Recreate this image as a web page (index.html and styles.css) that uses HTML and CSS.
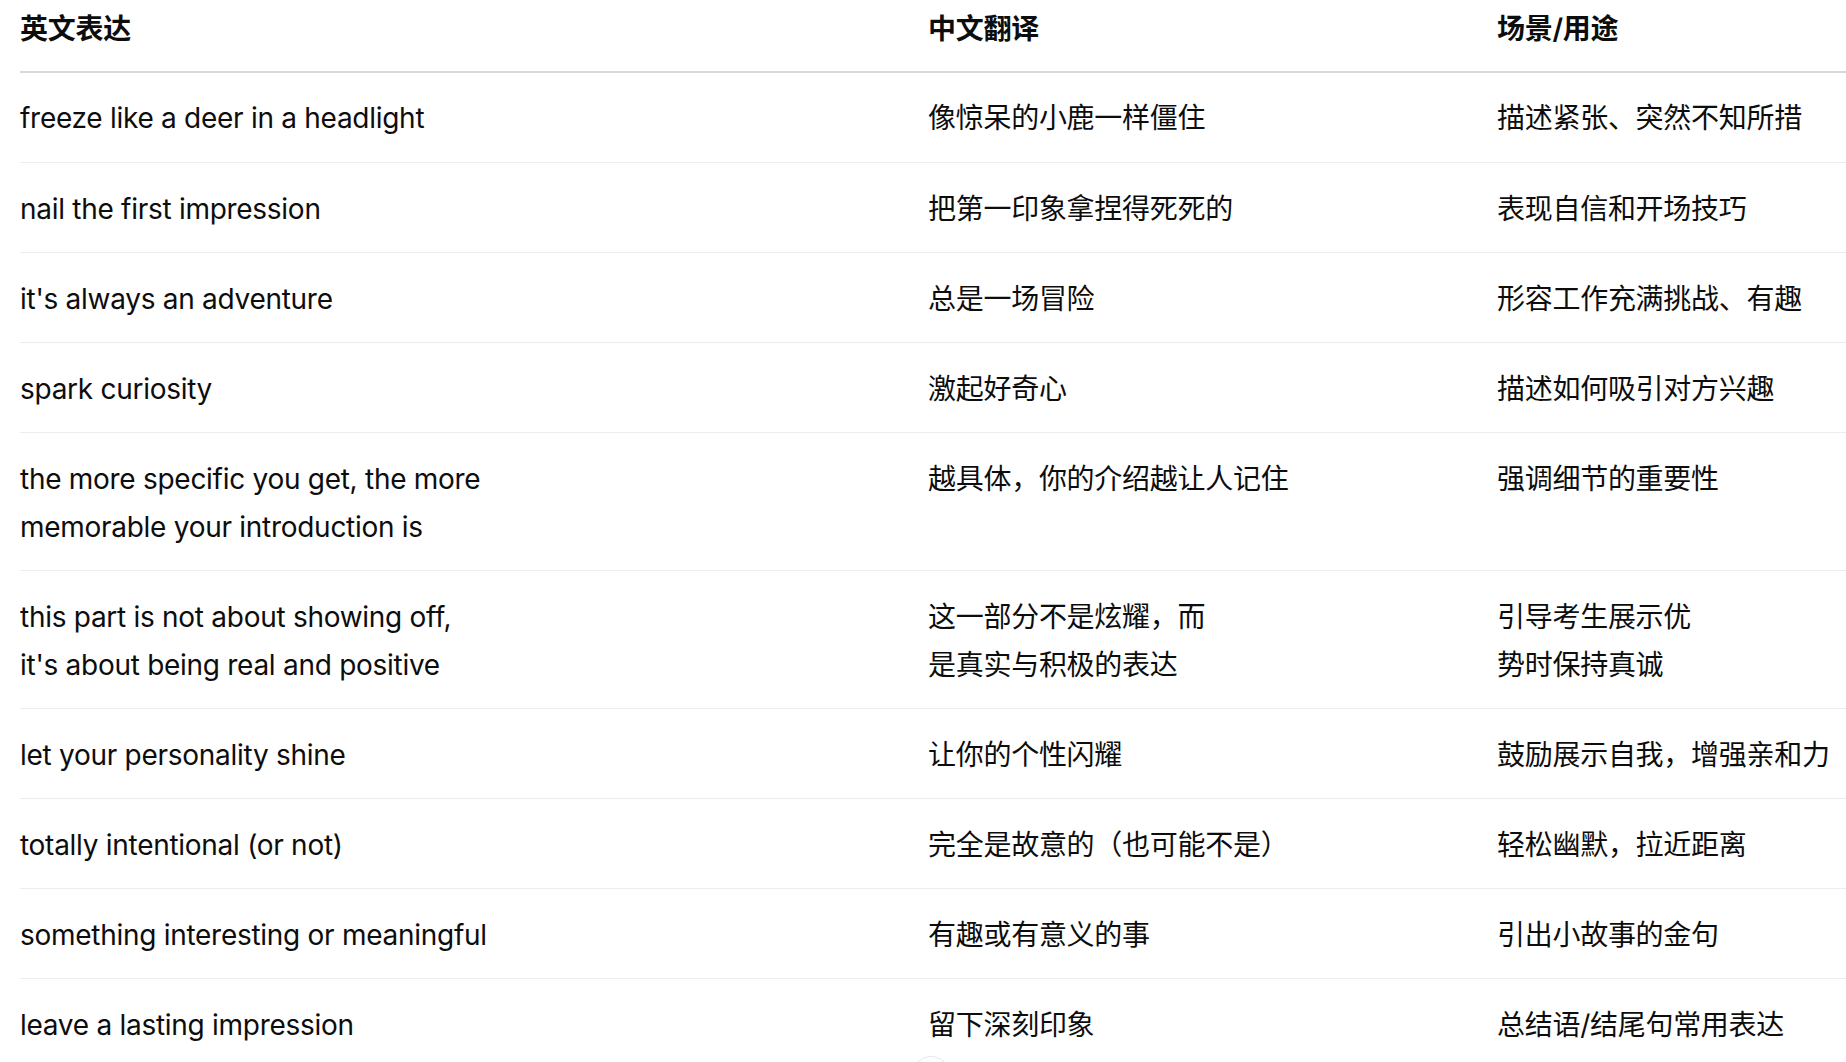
FILE: index.html
```html
<!DOCTYPE html>
<html lang="zh">
<head>
<meta charset="utf-8">
<link rel="stylesheet" href="styles.css">
</head>
<body>
<div class="wrap">
<table class="tbl">
<colgroup><col class="c1"><col class="c2"><col class="c3"></colgroup>
<thead>
<tr><th>英文表达</th><th>中文翻译</th><th>场景/用途</th></tr>
</thead>
<tbody>
<tr><td>freeze like a deer in a headlight</td><td>像惊呆的小鹿一样僵住</td><td>描述紧张、突然不知所措</td></tr>
<tr><td>nail the first impression</td><td>把第一印象拿捏得死死的</td><td>表现自信和开场技巧</td></tr>
<tr><td>it's always an adventure</td><td>总是一场冒险</td><td>形容工作充满挑战、有趣</td></tr>
<tr><td>spark curiosity</td><td>激起好奇心</td><td>描述如何吸引对方兴趣</td></tr>
<tr><td>the more specific you get, the more<br>memorable your introduction is</td><td>越具体，你的介绍越让人记住</td><td>强调细节的重要性</td></tr>
<tr><td>this part is not about showing off,<br>it's about being real and positive</td><td>这一部分不是炫耀，而<br>是真实与积极的表达</td><td>引导考生展示优<br>势时保持真诚</td></tr>
<tr><td>let your personality shine</td><td>让你的个性闪耀</td><td>鼓励展示自我，增强亲和力</td></tr>
<tr><td>totally intentional (or not)</td><td>完全是故意的（也可能不是）</td><td>轻松幽默，拉近距离</td></tr>
<tr><td>something interesting or meaningful</td><td>有趣或有意义的事</td><td>引出小故事的金句</td></tr>
<tr><td>leave a lasting impression</td><td>留下深刻印象</td><td>总结语/结尾句常用表达</td></tr>
</tbody>
</table>
<div class="scroll-btn"></div>
</div>
</body>
</html>
```
FILE: styles.css
```css
html, body {
  margin: 0;
  padding: 0;
  background: #ffffff;
  overflow: hidden;
}
body {
  font-family: Inter, "Noto Sans CJK SC", sans-serif;
  color: #0d0d0d;
  font-size: 28px;
  line-height: 47.6px;
  letter-spacing: -0.28px;
}
.wrap {
  padding-left: 20px;
  height: 1062px;
  overflow: hidden;
}
.tbl {
  border-collapse: collapse;
  table-layout: fixed;
  width: 1826px;
}
.c1 { width: 908px; }
.c2 { width: 569px; }
.c3 { width: 349px; }
.tbl th {
  text-align: left;
  font-weight: 600;
  padding: 6px 0 17px 0;
  border-bottom: 2px solid #d9d9d9;
  vertical-align: top;
}
.tbl td {
  padding: 22.8px 0 18.8px 0;
  border-bottom: 1px solid #ececec;
  vertical-align: top;
}
.scroll-btn {
  position: absolute;
  left: 912px;
  top: 1056px;
  width: 36px;
  height: 36px;
  border-radius: 50%;
  border: 1px solid #e6e6e6;
  background: #fff;
}
```
